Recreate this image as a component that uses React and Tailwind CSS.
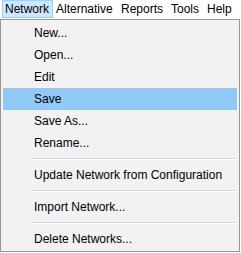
import React from "react";

// widths follow the reference's menu bar spacing
const MENUBAR = [
  { name: "Network", w: "w-[51px]" },
  { name: "Alternative", w: "w-[65px]" },
  { name: "Reports", w: "w-[50px]" },
  { name: "Tools", w: "w-[36px]" },
  { name: "Help", w: "w-[32px]" },
];

const ITEMS = [
  { label: "New..." },
  { label: "Open..." },
  { label: "Edit" },
  { label: "Save", active: true },
  { label: "Save As..." },
  { label: "Rename..." },
  { sep: true },
  { label: "Update Network from Configuration" },
  { sep: true },
  { label: "Import Network..." },
  { sep: true },
  { label: "Delete Networks..." },
];

export default function App() {
  return (
    <div className="w-[241px] h-[253px] bg-white font-['Segoe_UI','Liberation_Sans',Arial,sans-serif] text-[12px] text-black">
      {/* menu bar */}
      <div className="flex h-[19px] pl-[2px]">
        {MENUBAR.map((m, i) => (
          <div
            key={m.name}
            className={`${m.w} shrink-0 whitespace-nowrap h-[18px] leading-[16px] pl-[2px] border ${
              i === 0 ? "bg-[#cce8ff] border-[#99d1ff]" : "border-transparent"
            }`}
          >
            {m.name}
          </div>
        ))}
      </div>

      {/* dropdown */}
      <div className="w-[240px] border border-[#979797] bg-[#f2f2f2] px-[2px] pt-[2px] pb-[1px]">
        {ITEMS.map((item, i) =>
          item.sep ? (
            <div key={i} className="h-[10px] pt-[4px] pl-[28px] pr-[1px]">
              <div className="h-[1px] bg-[#d7d7d7]" />
              <div className="h-[1px] bg-white" />
            </div>
          ) : (
            <div
              key={i}
              className={`h-[22px] leading-[22px] pl-[31px] ${item.active ? "bg-[#91c9f7]" : ""}`}
            >
              {item.label}
            </div>
          )
        )}
      </div>
    </div>
  );
}
